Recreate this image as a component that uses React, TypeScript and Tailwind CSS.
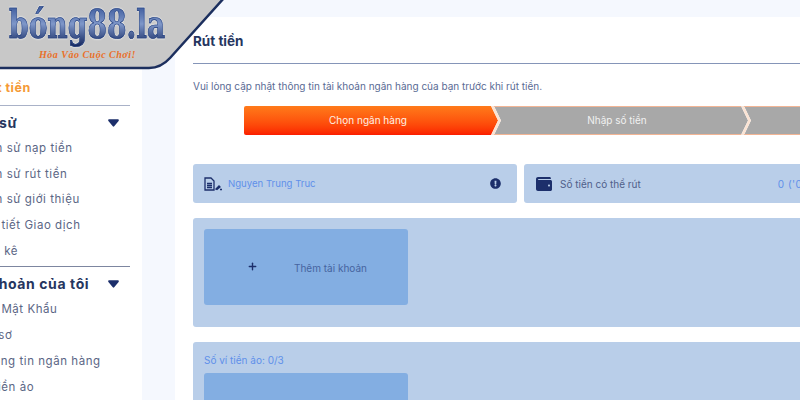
import { Plus } from "lucide-react";
import { FaExclamationCircle, FaWallet } from "react-icons/fa";

const historyItems = ["Lịch sử nạp tiền", "Lịch sử rút tiền", "Lịch sử giới thiệu", "Chi tiết Giao dịch", "Sao kê"];
const accountItems = ["Đổi Mật Khẩu", "Hồ sơ", "Thông tin ngân hàng", "Ví tiền ảo"];

function Caret() {
  return (
    <svg width="11" height="8" viewBox="0 0 11 8" className="text-[#1c2f6b] shrink-0">
      <path d="M1.2 0.3h8.6c.9 0 1.4 1 .8 1.7L6.2 7.3c-.4.5-1 .5-1.4 0L.4 2C-.2 1.3.3.3 1.2.3z" fill="currentColor" />
    </svg>
  );
}

function Logo() {
  return (
    <div className="absolute left-0 top-0 w-[226px] h-[70px]">
      <svg width="226" height="70" viewBox="0 0 226 70" className="absolute inset-0">
        <path d="M-2 -2H224L170 58Q161 68 149 68H-2Z" fill="#c8c8c8" stroke="#1c2f5e" strokeWidth="2.5" />
      </svg>
      <div className="absolute left-[9px] top-[1px] text-[39px] leading-[46px] font-bold whitespace-nowrap bg-gradient-to-b from-[#2c4a90] via-[#7f97c9] to-[#14245c] bg-clip-text text-transparent [font-family:'DejaVu_Serif',serif] [-webkit-text-stroke:0.7px_#24407f] drop-shadow-[0_0_1px_#ffffff] scale-x-[0.72] origin-left">
        bóng88.la
      </div>
      <div className="absolute left-[39px] top-[47px] text-[10px] leading-[16px] font-bold italic tracking-[0.5px] text-[#e8702a] whitespace-nowrap [font-family:'Liberation_Serif',serif]">
        Hòa Vào Cuộc Chơi!
      </div>
    </div>
  );
}

function SidebarGroup({ title, items, lineClass }: { title: string; items: string[]; lineClass: string }) {
  return (
    <div className={`border-t w-[152px] pb-[2px] ${lineClass}`}>
      <div className="h-[30px] pt-[3px] flex items-center justify-between pr-[11px]">
        <span className="-ml-[14px] text-[14px] font-bold tracking-[0.6px] text-[#26365f] whitespace-nowrap">{title}</span>
        <Caret />
      </div>
      <div className="flex flex-col">
        {items.map((item) => (
          <div key={item} className="h-[25.7px] leading-[25.7px] text-[11.5px] tracking-[0.55px] text-[#5b6685] whitespace-nowrap">
            {item}
          </div>
        ))}
      </div>
    </div>
  );
}

function Step({ label, first }: { label: string; first?: boolean }) {
  return (
    <div
      className={
        first
          ? "w-[254px] h-[29px] shrink-0 flex items-center justify-center pr-[6px] text-[10px] text-[#fff1e6] rounded-l-[2px] bg-gradient-to-b from-[#ff7a1a] to-[#fb1c00] [clip-path:polygon(0_0,247px_0,254px_50%,247px_100%,0_100%)]"
          : "w-[254px] h-[29px] shrink-0 -ml-[4px] flex items-center justify-center pr-[8px] text-[10px] text-[#f1f1f1] bg-[#a8a8a8] border-y border-[#f2b595] [clip-path:polygon(0_0,247px_0,254px_50%,247px_100%,0_100%,7px_50%)]"
      }
    >
      {label}
    </div>
  );
}

export default function App() {
  return (
    <div className="relative w-[800px] h-[400px] overflow-hidden flex bg-[#f5f8fe] [font-family:Inter,'Noto_Sans',sans-serif]">
      <Logo />

      {/* Sidebar */}
      <aside className="w-[142px] shrink-0 bg-white pt-[78px] overflow-hidden">
        <div className="-ml-[22px]">
          <div className="h-[27px] pl-[2px] text-[12.5px] leading-[20px] font-bold tracking-[0.5px] text-[#f59a36] whitespace-nowrap">Rút tiền</div>
          <SidebarGroup title="Lịch sử" items={historyItems} lineClass="border-[#a9b2c8]" />
          <SidebarGroup title="Tài khoản của tôi" items={accountItems} lineClass="border-[#7d86a0]" />
        </div>
      </aside>

      {/* Main */}
      <main className="ml-[33px] mt-[17px] w-[625px] shrink-0 bg-white pl-[18px]">
        <div className="w-[655px]">
          <h1 className="h-[47px] pt-[15px] text-[13.5px] leading-[18px] font-bold text-[#26365f] border-b border-[#8595b8]">Rút tiền</h1>
          <p className="mt-[14px] text-[10px] leading-[16px] text-[#5a6b94] whitespace-nowrap">
            Vui lòng cập nhật thông tin tài khoản ngân hàng của bạn trước khi rút tiền.
          </p>

          <div className="relative mt-[12px] ml-[51px] flex">
            <Step label="Chọn ngân hàng" first />
            <Step label="Nhập số tiền" />
            <Step label="" />
            <svg width="520" height="29" viewBox="0 0 520 29" fill="none" stroke="#fbe3d3" strokeWidth="2.5" className="absolute left-0 top-0">
              <path d="M248.5 0L255.5 14.5L248.5 29M498.5 0L505.5 14.5L498.5 29" />
            </svg>
          </div>

          <div className="mt-[29px] flex gap-[7px]">
            <div className="w-[324px] h-[39px] shrink-0 flex items-center bg-[#b9cee9] rounded-[3px] pl-[10px] pr-[16px]">
              <svg width="24" height="14" viewBox="0 0 24 14" fill="none" stroke="#1c2f6b" strokeWidth="1.3">
                <path d="M2 1h6l3 3v9H2z" />
                <path d="M4 6.5h5M4 8.5h5M4 10.5h5" />
                <path d="M13 12l3-3 1 1-3 2.5zM17 12.5h2" />
              </svg>
              <span className="ml-[1px] pt-[1px] text-[9.6px] text-[#5f90ea]">Nguyen Trung Truc</span>
              <FaExclamationCircle className="ml-auto mb-[1px] text-[#1c2f6b] text-[11px]" />
            </div>
            <div className="w-[324px] h-[39px] shrink-0 flex items-center bg-[#b9cee9] rounded-[3px] pl-[12px]">
              <FaWallet className="text-[#1c2f6b] text-[16px]" />
              <span className="ml-[8px] pt-[1px] text-[10px] text-[#50608a]">Số tiền có thể rút</span>
              <span className="ml-[137px] pt-[1px] text-[10px] tracking-[0.5px] text-[#5f90ea] whitespace-nowrap">0 ('0)</span>
            </div>
          </div>

          <section className="mt-[15px] h-[109px] bg-[#b9cee9] rounded-[3px] p-[11px]">
            <div className="w-[204px] h-[76px] bg-[#83aee2] rounded-[3px] flex items-center pl-[43px]">
              <Plus size={11} strokeWidth={3} className="text-[#1c2f6b] mb-[1px]" />
              <span className="ml-[36px] pt-[2px] text-[10px] text-[#46649f]">Thêm tài khoản</span>
            </div>
          </section>

          <section className="mt-[15px] h-[120px] bg-[#b9cee9] rounded-[3px] px-[11px] pt-[11px]">
            <div className="text-[10px] leading-[14px] text-[#5f90ea]">Số ví tiền ảo: 0/3</div>
            <div className="mt-[6px] w-[204px] h-[76px] bg-[#83aee2] rounded-[3px]" />
          </section>
        </div>
      </main>
    </div>
  );
}
